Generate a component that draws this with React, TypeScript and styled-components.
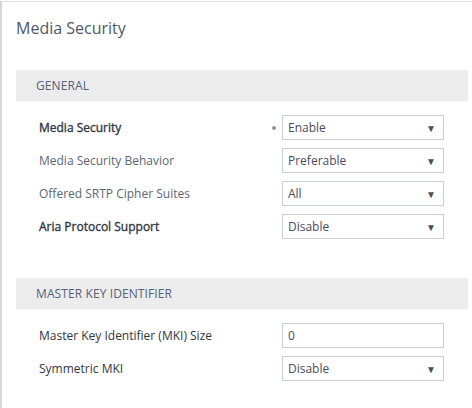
import styled, { createGlobalStyle } from 'styled-components'

const GlobalStyle = createGlobalStyle`
  body {
    margin: 0;
    background: #fff;
    font-family: 'Open Sans', 'Liberation Sans', sans-serif;
  }
`

const Panel = styled.div`
  margin-top: 1px;
  border-top: 1px solid #dfe2e7;
  border-left: 2px solid #d2d6dd;
  padding: 0 4px 0 14px;
  height: 407px;
  box-sizing: border-box;
  overflow: hidden;
`

const Title = styled.h1`
  margin: 0;
  padding: 15px 0 0 0;
  height: 68px;
  box-sizing: border-box;
  font-size: 16px;
  font-weight: 400;
  line-height: 22px;
  color: #4c5867;
`

const Section = styled.section`
  margin-bottom: 39px;
`

const Band = styled.div`
  height: 31px;
  background: #ececec;
  display: flex;
  align-items: center;
  padding-left: 20px;
  font-size: 12px;
  color: #55627a;
  letter-spacing: 0.1px;
`

const Rows = styled.div`
  display: flex;
  flex-direction: column;
  gap: 8px;
  padding: 14px 0 0 23px;
`

const Row = styled.div`
  display: flex;
  align-items: center;
  height: 25px;
`

const Label = styled.div<{ $tone: 'bold' | 'dark' | 'light' }>`
  width: 220px;
  font-size: 12px;
  font-weight: 400;
  color: ${p => (p.$tone === 'light' ? '#5b6677' : '#2f3642')};
  -webkit-text-stroke: ${p => (p.$tone === 'bold' ? '0.35px #2f3642' : '0')};
`

const Marker = styled.div`
  width: 23px;
  display: flex;
  justify-content: center;
  align-items: center;
  padding-left: 6px;
  box-sizing: border-box;
`

const Dot = styled.span`
  width: 4px;
  height: 4px;
  border-radius: 50%;
  background: #8a94a3;
`

const Field = styled.div`
  width: 162px;
  height: 25px;
  box-sizing: border-box;
  border: 1px solid #c9cdd6;
  display: flex;
  align-items: center;
  justify-content: space-between;
  padding: 0 7px 0 5px;
  font-size: 12px;
  color: #4a4b5e;
  background: #fff;
`

const Arrow = styled.span`
  font-size: 10px;
  color: #4a4f5a;
`

type Item = {
  label: string
  value: string
  tone: 'bold' | 'dark' | 'light'
  select?: boolean
  mark?: boolean
}

const general: Item[] = [
  { label: 'Media Security', value: 'Enable', tone: 'bold', select: true, mark: true },
  { label: 'Media Security Behavior', value: 'Preferable', tone: 'light', select: true },
  { label: 'Offered SRTP Cipher Suites', value: 'All', tone: 'light', select: true },
  { label: 'Aria Protocol Support', value: 'Disable', tone: 'bold', select: true },
]

const mki: Item[] = [
  { label: 'Master Key Identifier (MKI) Size', value: '0', tone: 'dark' },
  { label: 'Symmetric MKI', value: 'Disable', tone: 'dark', select: true },
]

function ParamRow({ item }: { item: Item }) {
  return (
    <Row>
      <Label $tone={item.tone}>{item.label}</Label>
      <Marker>{item.mark && <Dot />}</Marker>
      <Field>
        <span>{item.value}</span>
        {item.select && <Arrow>▼</Arrow>}
      </Field>
    </Row>
  )
}

export default function App() {
  return (
    <>
      <GlobalStyle />
      <Panel>
        <Title>Media Security</Title>
        <Section>
          <Band>GENERAL</Band>
          <Rows>
            {general.map(i => (
              <ParamRow key={i.label} item={i} />
            ))}
          </Rows>
        </Section>
        <Section>
          <Band>MASTER KEY IDENTIFIER</Band>
          <Rows>
            {mki.map(i => (
              <ParamRow key={i.label} item={i} />
            ))}
          </Rows>
        </Section>
      </Panel>
    </>
  )
}
